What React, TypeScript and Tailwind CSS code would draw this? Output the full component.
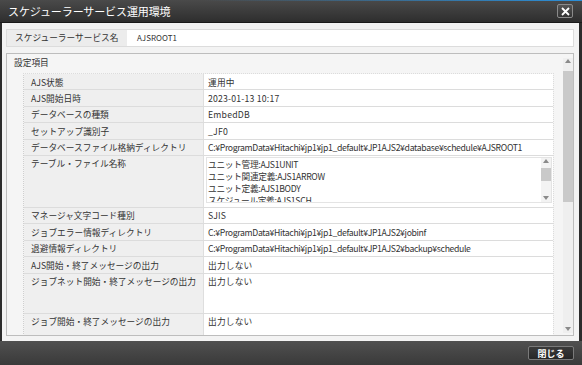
import React from "react"

const FONT = { fontFamily: '"Noto Sans CJK JP", "Noto Sans", sans-serif' }

type Row = { label: string; value?: string; kind?: "list" | "tall" | "last" }

const ROWS: Row[] = [
  { label: "AJS状態", value: "運用中" },
  { label: "AJS開始日時", value: "2023-01-13 10:17" },
  { label: "データベースの種類", value: "EmbedDB" },
  { label: "セットアップ識別子", value: "_JF0" },
  { label: "データベースファイル格納ディレクトリ", value: "C:¥ProgramData¥Hitachi¥jp1¥jp1_default¥JP1AJS2¥database¥schedule¥AJSROOT1" },
  { label: "テーブル・ファイル名称", kind: "list" },
  { label: "マネージャ文字コード種別", value: "SJIS" },
  { label: "ジョブエラー情報ディレクトリ", value: "C:¥ProgramData¥Hitachi¥jp1¥jp1_default¥JP1AJS2¥jobinf" },
  { label: "退避情報ディレクトリ", value: "C:¥ProgramData¥Hitachi¥jp1¥jp1_default¥JP1AJS2¥backup¥schedule" },
  { label: "AJS開始・終了メッセージの出力", value: "出力しない" },
  { label: "ジョブネット開始・終了メッセージの出力", value: "出力しない", kind: "tall" },
  { label: "ジョブ開始・終了メッセージの出力", value: "出力しない", kind: "last" },
]

const TABLES = ["ユニット管理:AJS1UNIT", "ユニット関連定義:AJS1ARROW", "ユニット定義:AJS1BODY", "スケジュール定義:AJS1SCH"]

function Arrow({ up }: { up?: boolean }) {
  return (
    <svg width="6" height="4" viewBox="0 0 6 4" className="mx-auto">
      <path d={up ? "M0 4 L3 0 L6 4 Z" : "M0 0 L3 4 L6 0 Z"} fill="#8a8a8a" />
    </svg>
  )
}

function ScrollBar({ thumbTop, thumbH, className }: { thumbTop: number; thumbH: number; className: string }) {
  return (
    <div className={`relative w-[10px] shrink-0 flex flex-col justify-between ${className}`}>
      <div className="pt-[1px]"><Arrow up /></div>
      <div className="absolute left-0 right-0 bg-[#c9c9c9]" style={{ top: thumbTop, height: thumbH }} />
      <div className="pb-[2px]"><Arrow /></div>
    </div>
  )
}

function TableRow({ row }: { row: Row }) {
  const h = row.kind === "list" ? "h-[52px]" : row.kind === "tall" ? "h-[40px]" : row.kind === "last" ? "h-[30px]" : "h-[16.4px]"
  // long paths are set tighter so they fit like the original
  const track = row.value?.includes("¥") ? "tracking-[-0.35px]" : "tracking-[0.2px]"
  return (
    <div className={`flex shrink-0 ${h} border-b border-[#dcdcdc]`}>
      <div className="w-[180px] shrink-0 bg-[#efefef] border-r border-[#dedede] pl-[7px] pt-[2.5px] leading-[11px] whitespace-nowrap">
        {row.label}
      </div>
      {row.kind === "list" ? (
        <div className="flex-1 bg-white pl-[2px] pt-[1.5px] pr-[1px]">
          <div className="flex h-[46px] border border-[#e4e4e4]">
            <div className="flex-1 overflow-hidden pl-[1px] pt-[1px] leading-[11.8px] tracking-[-0.3px]">
              {TABLES.map((t) => (
                <div key={t} className="whitespace-nowrap">{t}</div>
              ))}
            </div>
            <ScrollBar thumbTop={10} thumbH={13} className="bg-[#f3f3f3] h-full" />
          </div>
        </div>
      ) : (
        <div className={`flex-1 bg-white pl-[4px] pt-[2.5px] leading-[11px] whitespace-nowrap overflow-hidden ${track}`}>
          {row.value}
        </div>
      )}
    </div>
  )
}

export default function App() {
  return (
    <div className="w-[582px] h-[365px] flex flex-col bg-[#2c2c2c] text-[8.7px] text-[#333]" style={FONT}>
      {/* title bar */}
      <div className="relative h-[23px] shrink-0 flex items-center justify-between pl-[8px] pr-[9px] bg-[linear-gradient(#4a4a4a,#2e2e2e)] border-b border-[#1a1a1a]">
        <div className="absolute left-0 right-0 top-0 h-[1px] bg-[linear-gradient(to_right,transparent_35%,#2b8fd9)]" />
        <span className="text-white text-[11px] leading-none tracking-[-0.1px]">スケジューラーサービス運用環境</span>
        <button className="w-[16px] h-[14px] flex items-center justify-center rounded-[2px] border border-[#8b8b8b] bg-[linear-gradient(#555,#333)]">
          <svg width="9" height="9" viewBox="0 0 9 9">
            <path d="M1 1 L8 8 M8 1 L1 8" stroke="#fff" strokeWidth="1.8" />
          </svg>
        </button>
      </div>

      {/* body */}
      <div className="flex-1 min-h-0 flex flex-col bg-[#f3f3f3] border-l-2 border-r-[3px] border-[#2c2c2c] pl-[4px] pr-[5px] pt-[6px] pb-[5px] gap-[6px]">
        <div className="flex h-[18px] shrink-0 border border-[#dcdcdc] bg-white">
          <div className="w-[120px] bg-[#ececec] pl-[8px] flex items-center">スケジューラーサービス名</div>
          <div className="pl-[10px] flex items-center text-[8px]">AJSROOT1</div>
        </div>

        <div className="flex-1 min-h-0 flex border border-[#bdbdbd] bg-[#f5f5f5] overflow-hidden">
          <div className="flex-1 min-h-0 overflow-hidden">
            <div className="h-[19px] pl-[7px] pt-[3px] leading-[11px]">設定項目</div>
            <div className="ml-[16px] w-[531px] border-t border-r border-[#dcdcdc] border-l border-l-[#cfcfcf] border-dotted">
              {ROWS.map((r) => (
                <TableRow key={r.label} row={r} />
              ))}
            </div>
          </div>
          <ScrollBar thumbTop={13} thumbH={131} className="mt-[4px] mb-[2px] ml-[9px] bg-[#efefef]" />
        </div>
      </div>

      {/* footer */}
      <div className="h-[24px] shrink-0 flex items-center justify-end pr-[8px] bg-[linear-gradient(#505050,#3a3a3a)]">
        <button className="w-[46px] h-[14px] flex items-center justify-center rounded-[2px] border border-[#7a7a7a] bg-[linear-gradient(#3a3a3a,#262626)] text-white text-[9px] leading-none font-bold">
          閉じる
        </button>
      </div>
    </div>
  )
}
